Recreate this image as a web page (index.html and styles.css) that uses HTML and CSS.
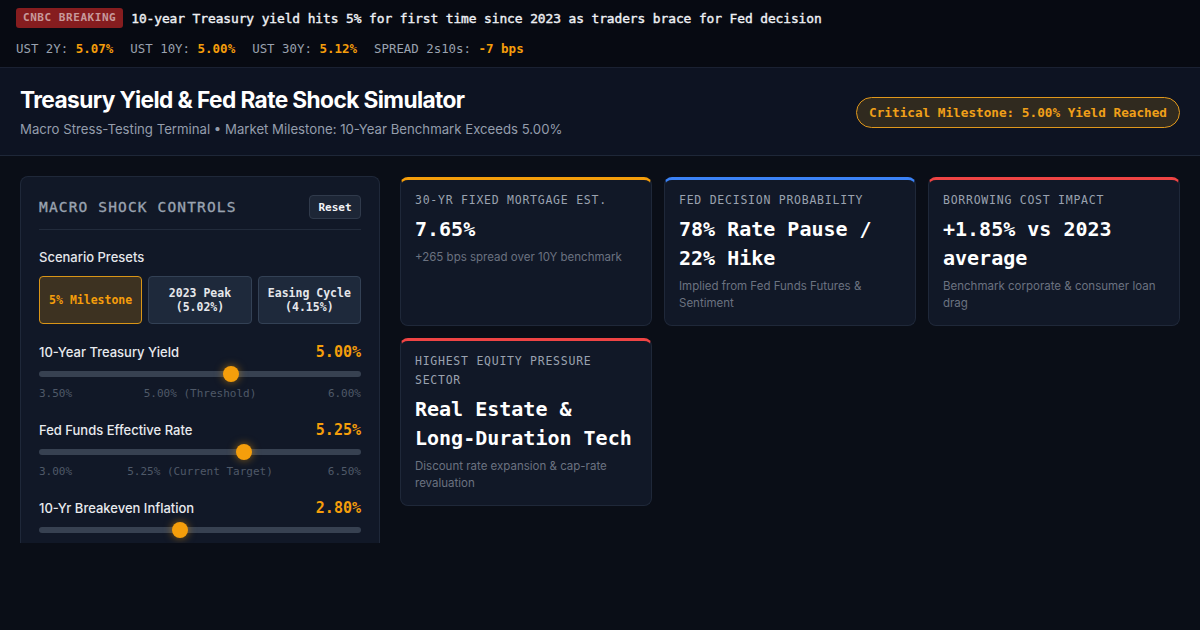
FILE: index.html
```html
<!DOCTYPE html>
<html lang="en">
<head>
<meta charset="utf-8">
<title>Treasury Yield &amp; Fed Rate Shock Simulator</title>
<link rel="stylesheet" href="styles.css">
</head>
<body>
<div class="topbar">
  <div class="news-row">
    <span class="breaking">CNBC BREAKING</span>
    <span class="headline">10-year Treasury yield hits 5% for first time since 2023 as traders brace for Fed decision</span>
  </div>
  <div class="ticker">
    <span class="tick"><span class="tick-label">UST 2Y:</span><span class="tick-val">5.07%</span></span>
    <span class="tick"><span class="tick-label">UST 10Y:</span><span class="tick-val">5.00%</span></span>
    <span class="tick"><span class="tick-label">UST 30Y:</span><span class="tick-val">5.12%</span></span>
    <span class="tick"><span class="tick-label">SPREAD 2s10s:</span><span class="tick-val">-7 bps</span></span>
  </div>
</div>

<header class="header">
  <div class="header-text">
    <h1 class="title">Treasury Yield &amp; Fed Rate Shock Simulator</h1>
    <p class="subtitle">Macro Stress-Testing Terminal • Market Milestone: 10-Year Benchmark Exceeds 5.00%</p>
  </div>
  <div class="milestone">Critical Milestone: 5.00% Yield Reached</div>
</header>

<main class="main">
  <section class="panel">
    <div class="panel-head">
      <h2 class="panel-title">MACRO SHOCK CONTROLS</h2>
      <button class="reset">Reset</button>
    </div>
    <div class="presets-label">Scenario Presets</div>
    <div class="presets">
      <button class="preset active">5% Milestone</button>
      <button class="preset">2023 Peak<br>(5.02%)</button>
      <button class="preset">Easing Cycle<br>(4.15%)</button>
    </div>

    <div class="slider-group">
      <div class="slider-head"><span class="slider-name">10-Year Treasury Yield</span><span class="slider-val">5.00%</span></div>
      <input class="range" type="range" min="3.5" max="6" step="0.01" value="5">
      <div class="scale"><span>3.50%</span><span>5.00% (Threshold)</span><span>6.00%</span></div>
    </div>

    <div class="slider-group">
      <div class="slider-head"><span class="slider-name">Fed Funds Effective Rate</span><span class="slider-val">5.25%</span></div>
      <input class="range" type="range" min="3" max="6.5" step="0.01" value="5.25">
      <div class="scale"><span>3.00%</span><span>5.25% (Current Target)</span><span>6.50%</span></div>
    </div>

    <div class="slider-group">
      <div class="slider-head"><span class="slider-name">10-Yr Breakeven Inflation</span><span class="slider-val">2.80%</span></div>
      <input class="range" type="range" min="1.5" max="4.5" step="0.01" value="2.8">
    </div>
  </section>

  <section class="cards">
    <div class="card card-orange">
      <div class="card-label">30-YR FIXED MORTGAGE EST.</div>
      <div class="card-value">7.65%</div>
      <div class="card-desc">+265 bps spread over 10Y benchmark</div>
    </div>
    <div class="card card-blue">
      <div class="card-label">FED DECISION PROBABILITY</div>
      <div class="card-value">78% Rate Pause / 22% Hike</div>
      <div class="card-desc">Implied from Fed Funds Futures &amp; Sentiment</div>
    </div>
    <div class="card card-red">
      <div class="card-label">BORROWING COST IMPACT</div>
      <div class="card-value">+1.85% vs 2023 average</div>
      <div class="card-desc">Benchmark corporate &amp; consumer loan drag</div>
    </div>
    <div class="card card-red">
      <div class="card-label">HIGHEST EQUITY PRESSURE SECTOR</div>
      <div class="card-value">Real Estate &amp; Long-Duration Tech</div>
      <div class="card-desc">Discount rate expansion &amp; cap-rate revaluation</div>
    </div>
  </section>
</main>
</body>
</html>
```

FILE: styles.css
```css
* { box-sizing: border-box; }

html, body {
  margin: 0;
  padding: 0;
}

body {
  background: #0a0e17;
  color: #e5e7eb;
  font-family: Inter, "Noto Sans", sans-serif;
  height: 630px;
  overflow: hidden;
}

.topbar {
  background: #070a12;
  border-bottom: 1px solid #1a2132;
  padding: 8px 16px 10px;
  font-family: "DejaVu Sans Mono", "Liberation Mono", monospace;
}

.news-row {
  display: flex;
  align-items: center;
  gap: 8px;
  height: 20px;
}

.breaking {
  background: #861d1f;
  color: #c7999b;
  font-size: 11px;
  font-weight: bold;
  letter-spacing: 0.55px;
  padding: 0 7px;
  height: 20px;
  line-height: 20px;
  border-radius: 3px;
}

.headline {
  color: #eef0f4;
  font-size: 12.9px;
  font-weight: normal;
  letter-spacing: -0.09px;
  -webkit-text-stroke: 0.4px #eef0f4;
}

.ticker {
  display: flex;
  gap: 17px;
  margin-top: 13px;
  font-size: 12.4px;
  line-height: 16px;
  align-items: baseline;
}

.tick {
  display: flex;
  gap: 7.5px;
  align-items: baseline;
}

.tick-label { color: #9aa2af; }
.tick-val { color: #f59e0b; font-weight: bold; font-size: 12.5px; }

.header {
  background: #0d1322;
  border-bottom: 1px solid #1e2738;
  padding: 17px 20px 17px;
  display: flex;
  align-items: center;
  justify-content: space-between;
}

.title {
  margin: 0;
  font-size: 22.7px;
  line-height: 29px;
  font-weight: 700;
  letter-spacing: -0.6px;
  color: #ffffff;
}

.subtitle {
  margin: 6px 0 0;
  font-size: 13.2px;
  line-height: 18px;
  color: #949dac;
}

.milestone {
  margin-top: 1px;
  border: 1px solid #e0981c;
  background: #302a1f;
  color: #f0a019;
  border-radius: 16px;
  font-family: "DejaVu Sans Mono", "Liberation Mono", monospace;
  font-size: 12.7px;
  font-weight: bold;
  height: 31px;
  line-height: 29px;
  padding: 0 12px;
}

.main {
  display: grid;
  grid-template-columns: 360px 1fr;
  gap: 20px;
  padding: 20px;
  align-items: start;
}

.panel {
  background: #111827;
  border: 1px solid #1f2839;
  border-bottom: none;
  border-radius: 8px 8px 0 0;
  padding: 18px 18px 0;
  height: 367px;
  overflow: hidden;
}

.panel-head {
  display: flex;
  justify-content: space-between;
  align-items: center;
  padding-bottom: 10px;
  border-bottom: 1px solid #222b3b;
}

.panel-title {
  margin: 0;
  font-family: "DejaVu Sans Mono", "Liberation Mono", monospace;
  font-size: 14.5px;
  font-weight: normal;
  letter-spacing: 1.15px;
  color: #9aa3b0;
  -webkit-text-stroke: 0.35px #9aa3b0;
}

.reset {
  background: #1d2636;
  border: 1px solid #303a4b;
  color: #f3f4f6;
  border-radius: 4px;
  height: 24px;
  width: 52px;
  padding: 0;
  font-family: "DejaVu Sans Mono", "Liberation Mono", monospace;
  font-size: 11px;
  font-weight: bold;
}

.presets-label {
  margin-top: 18px;
  font-size: 13px;
  line-height: 18px;
  font-weight: 500;
  color: #e5e7eb;
}

.presets {
  margin-top: 10px;
  display: grid;
  grid-template-columns: repeat(3, 1fr);
  gap: 6px;
}

.preset {
  height: 48px;
  background: #1e293b;
  border: 1px solid #334155;
  border-radius: 4px;
  color: #e5e7eb;
  font-family: "DejaVu Sans Mono", "Liberation Mono", monospace;
  font-size: 11.5px;
  font-weight: bold;
  line-height: 14px;
  padding: 0 4px;
}

.preset.active {
  background: #3d3221;
  border-color: #d99517;
  color: #f59e0b;
}

.slider-group {
  margin-top: 18px;
}

.slider-group + .slider-group {
  margin-top: 19px;
}

.slider-head {
  display: flex;
  justify-content: space-between;
  align-items: center;
  height: 20px;
}

.slider-name {
  font-size: 13px;
  font-weight: 500;
  color: #e8eaee;
}

.slider-val {
  font-family: "DejaVu Sans Mono", "Liberation Mono", monospace;
  font-size: 15px;
  font-weight: bold;
  color: #f59e0b;
}

.range {
  -webkit-appearance: none;
  appearance: none;
  display: block;
  width: 100%;
  height: 16px;
  margin: 4px 0 0;
  background: transparent;
}

.range::-webkit-slider-runnable-track {
  height: 6px;
  background: #374151;
  border-radius: 3px;
}

.range::-webkit-slider-thumb {
  -webkit-appearance: none;
  appearance: none;
  width: 16px;
  height: 16px;
  margin-top: -5px;
  border-radius: 50%;
  background: #f59e0b;
  box-shadow: 0 0 8px rgba(245, 158, 11, 0.55);
  border: none;
}

.scale {
  display: flex;
  justify-content: space-between;
  margin-top: 5px;
  font-family: "DejaVu Sans Mono", "Liberation Mono", monospace;
  font-size: 11px;
  line-height: 14px;
  color: #4f5968;
}

.cards {
  display: grid;
  grid-template-columns: repeat(3, 1fr);
  gap: 12px 12px;
  align-content: start;
  margin-top: 1px;
}

.card {
  background: #111827;
  border: 1px solid #1f2839;
  border-top: 3px solid #f59e0b;
  border-radius: 8px;
  padding: 11px 14px 13px;
}

.card-orange { border-top-color: #f59e0b; }
.card-blue { border-top-color: #3b82f6; }
.card-red { border-top-color: #ef4444; }

.card-label {
  font-family: "DejaVu Sans Mono", "Liberation Mono", monospace;
  font-size: 11.5px;
  letter-spacing: 0.75px;
  line-height: 19px;
  color: #9aa2af;
}

.card-value {
  margin-top: 5px;
  font-family: "DejaVu Sans Mono", "Liberation Mono", monospace;
  font-size: 20px;
  font-weight: bold;
  line-height: 29px;
  color: #ffffff;
}

.card-desc {
  margin-top: 5px;
  font-size: 11.5px;
  line-height: 17px;
  color: #6b7280;
}
```
